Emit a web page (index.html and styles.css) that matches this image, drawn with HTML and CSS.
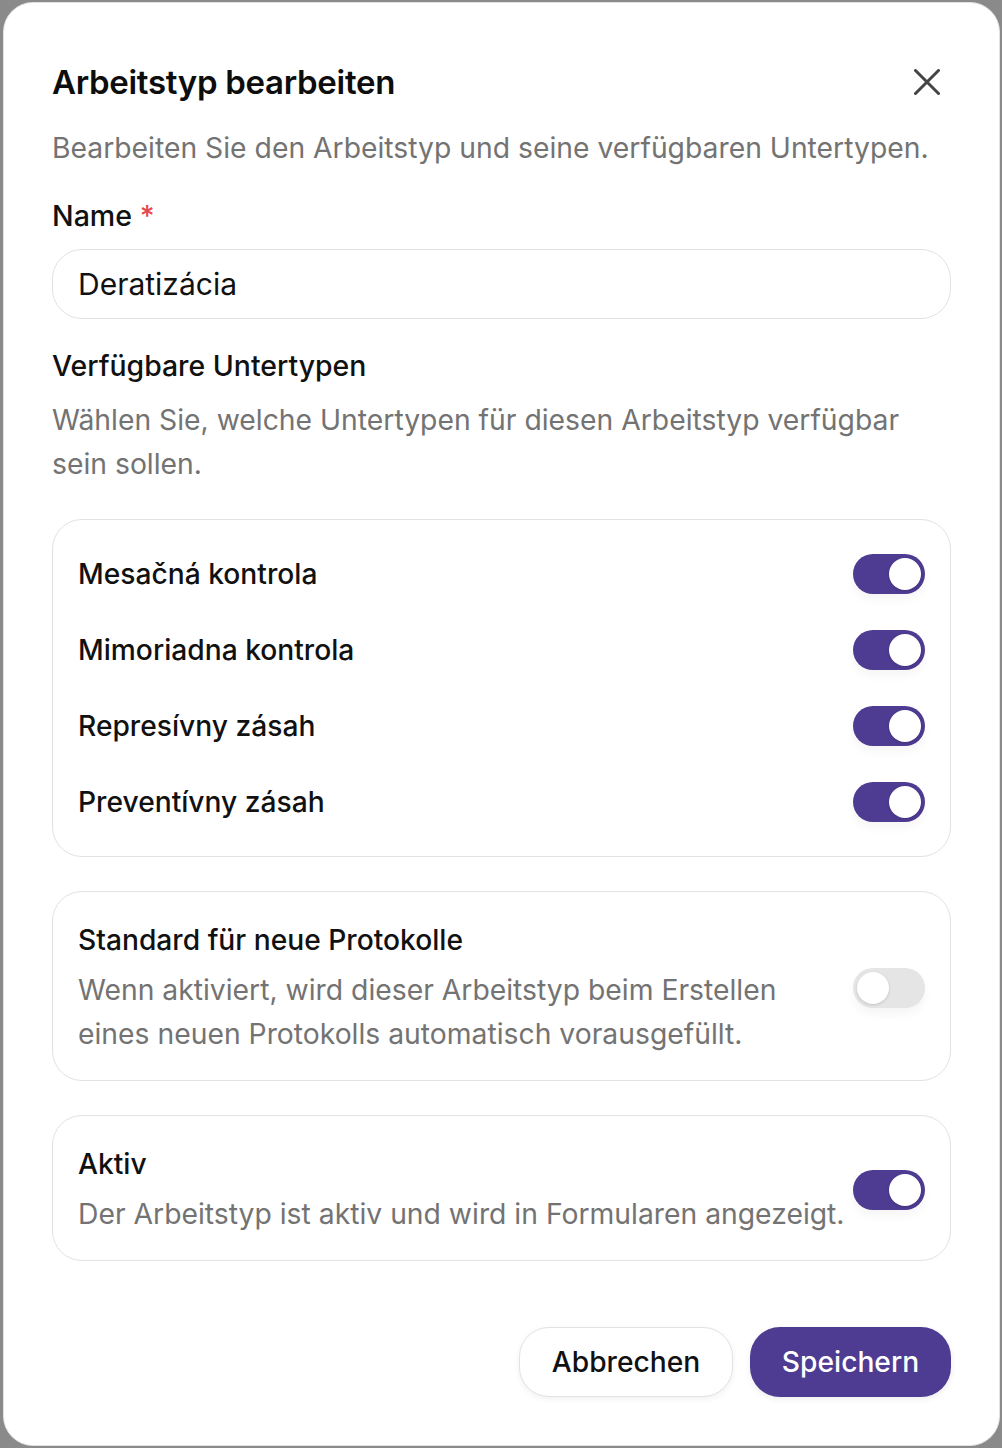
FILE: index.html
```html
<!DOCTYPE html>
<html lang="de">
<head>
<meta charset="utf-8">
<title>Arbeitstyp bearbeiten</title>
<link rel="stylesheet" href="styles.css">
</head>
<body>
<div class="dialog">
  <div class="header">
    <h2 class="title">Arbeitstyp bearbeiten</h2>
    <button class="close" aria-label="Schließen">
      <svg width="26" height="26" viewBox="0 0 26 26"><path d="M1.5 1.5 L24.5 24.5 M24.5 1.5 L1.5 24.5" stroke="#444" stroke-width="3" stroke-linecap="round" fill="none"/></svg>
    </button>
  </div>
  <p class="desc">Bearbeiten Sie den Arbeitstyp und seine verfügbaren Untertypen.</p>

  <label class="label">Name <span class="req">*</span></label>
  <div class="input">Deratizácia</div>

  <div class="section-title">Verfügbare Untertypen</div>
  <p class="section-desc">Wählen Sie, welche Untertypen für diesen Arbeitstyp verfügbar sein sollen.</p>

  <div class="card list">
    <div class="row"><span class="row-text">Mesačná kontrola</span><span class="toggle on"><span class="thumb"></span></span></div>
    <div class="row"><span class="row-text">Mimoriadna kontrola</span><span class="toggle on"><span class="thumb"></span></span></div>
    <div class="row"><span class="row-text">Represívny zásah</span><span class="toggle on"><span class="thumb"></span></span></div>
    <div class="row"><span class="row-text">Preventívny zásah</span><span class="toggle on"><span class="thumb"></span></span></div>
  </div>

  <div class="card setting">
    <div class="setting-text">
      <div class="setting-title">Standard für neue Protokolle</div>
      <div class="setting-desc">Wenn aktiviert, wird dieser Arbeitstyp beim Erstellen eines neuen Protokolls automatisch vorausgefüllt.</div>
    </div>
    <span class="toggle off"><span class="thumb"></span></span>
  </div>

  <div class="card setting">
    <div class="setting-text">
      <div class="setting-title">Aktiv</div>
      <div class="setting-desc">Der Arbeitstyp ist aktiv und wird in Formularen angezeigt.</div>
    </div>
    <span class="toggle on"><span class="thumb"></span></span>
  </div>

  <div class="footer">
    <button class="btn secondary">Abbrechen</button>
    <button class="btn primary">Speichern</button>
  </div>
</div>
</body>
</html>
```
FILE: styles.css
```css
* { box-sizing: border-box; }
html, body { margin: 0; padding: 0; }
body {
  background: #8a8a8a;
  font-family: Inter, "Noto Sans", "Liberation Sans", sans-serif;
  color: #111;
  height: 1448px;
  padding: 2px 2px 2px 3px;
}
.dialog {
  background: #fff;
  border: 1px solid #e2e2e2;
  border-radius: 30px;
  height: 1444px;
  padding: 57px 48px 48px 48px;
  display: flex;
  flex-direction: column;
}
.header {
  display: flex;
  align-items: center;
  justify-content: space-between;
  height: 44px;
}
.title {
  margin: 0;
  font-size: 33px;
  font-weight: 600;
  line-height: 44px;
  letter-spacing: -0.3px;
  color: #0d0d0d;
}
.close {
  background: none;
  border: 0;
  padding: 0;
  margin-right: 11px;
  width: 26px;
  height: 26px;
  display: flex;
}
.desc {
  margin: 24px 0 0;
  font-size: 28.3px;
  line-height: 40px;
  color: #737373;
}
.label {
  margin-top: 28px;
  font-size: 28.6px;
  line-height: 40px;
  font-weight: 500;
}
.req { color: #e5484d; }
.input {
  margin-top: 13px;
  height: 70px;
  border: 1px solid #e2e2e2;
  border-radius: 30px;
  padding: 0 25px;
  display: flex;
  align-items: center;
  font-size: 30px;
  color: #111;
}
.section-title {
  margin-top: 27px;
  font-size: 28.4px;
  line-height: 40px;
  font-weight: 500;
}
.section-desc {
  margin: 12px 0 0;
  font-size: 28.3px;
  line-height: 44px;
  color: #737373;
}
.card {
  border: 1px solid #e2e2e2;
  border-radius: 30px;
  padding: 28px 25px 24px;
}
.list {
  margin-top: 33px;
  padding: 34px 25px;
  display: flex;
  flex-direction: column;
  gap: 36px;
}
.row {
  display: flex;
  align-items: center;
  justify-content: space-between;
  height: 40px;
}
.row-text {
  font-size: 28.2px;
  font-weight: 500;
}
.setting {
  margin-top: 34px;
  display: flex;
  align-items: center;
  justify-content: space-between;
  gap: 4px;
}
.setting-title {
  font-size: 28.2px;
  line-height: 40px;
  font-weight: 500;
}
.setting-desc {
  margin-top: 8px;
  font-size: 28.3px;
  line-height: 44px;
  color: #737373;
}
.toggle {
  flex: none;
  width: 72px;
  height: 40px;
  border-radius: 20px;
  padding: 4px;
  display: flex;
  box-shadow: 0 6px 10px rgba(0,0,0,0.04);
}
.toggle.on { background: #4e3b92; justify-content: flex-end; }
.toggle.off { background: #e5e5e5; justify-content: flex-start; }
.thumb {
  width: 32px;
  height: 32px;
  border-radius: 50%;
  background: #fff;
  box-shadow: 0 1px 3px rgba(0,0,0,0.15);
}
.footer {
  margin-top: auto;
  display: flex;
  justify-content: flex-end;
  gap: 17px;
}
.btn {
  height: 70px;
  border-radius: 30px;
  font-family: inherit;
  font-size: 28.2px;
  font-weight: 500;
  padding: 0 20px;
}
.secondary {
  background: #fff;
  border: 1px solid #e2e2e2;
  color: #111;
  width: 214px;
  box-shadow: 0 2px 6px rgba(0,0,0,0.06);
}
.primary {
  background: #4e3b92;
  border: 0;
  color: #fff;
  width: 201px;
  box-shadow: 0 2px 6px rgba(0,0,0,0.08);
}
```
